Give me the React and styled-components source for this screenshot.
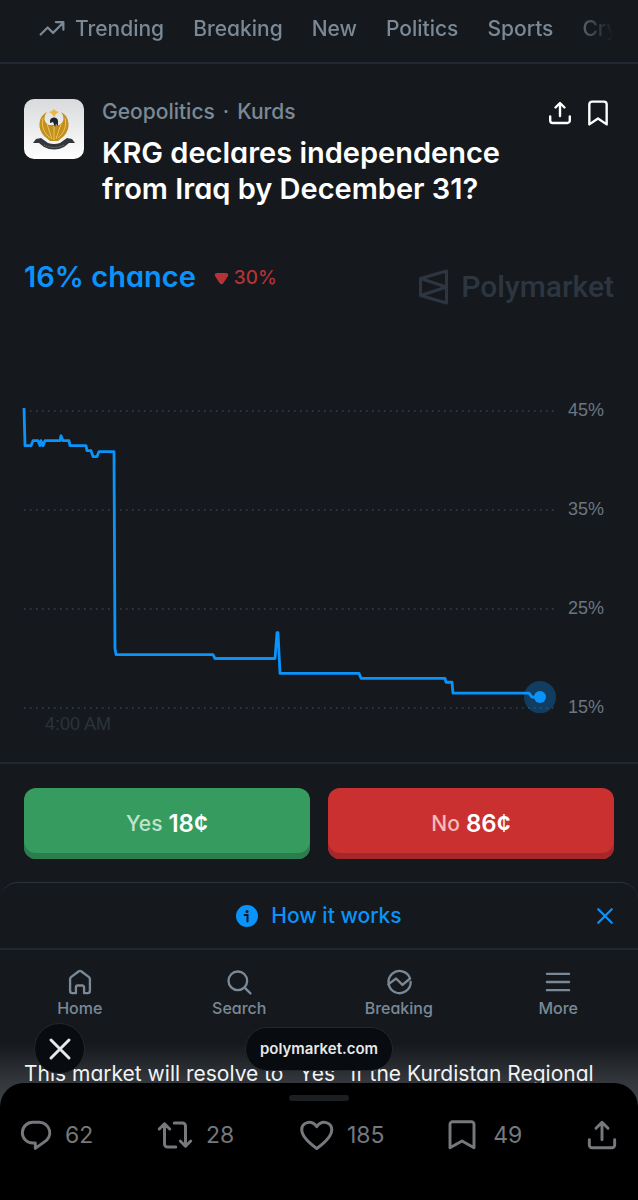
import styled, { createGlobalStyle } from "styled-components"

const GlobalStyle = createGlobalStyle`
    * {
        box-sizing: border-box;
    }

    body {
        margin: 0;
        background-color: #15191d;
        font-family: Inter, "Liberation Sans", sans-serif;
        font-feature-settings: "cv11";
        color: #ffffff;
    }

    h1, p {
        margin: 0;
    }

    button {
        font: inherit;
        font-feature-settings: inherit;
        color: inherit;
        background: none;
        border: 0;
        padding: 0;
        cursor: pointer;
    }

    a {
        color: inherit;
        text-decoration: none;
    }

    svg {
        display: block;
        flex: none;
    }
`

const Page = styled.div`
    display: flex;
    flex-direction: column;
    min-height: 100vh;
    overflow: hidden;
`

const TopNav = styled.nav`
    display: flex;
    align-items: center;
    gap: 29px;
    height: 64px;
    padding: 0 0 8px 39px;
    margin-right: 24px;
    overflow: hidden;
    mask-image: linear-gradient(to right, #000 92%, transparent 100%);
`

const TopBar = styled.header`
    border-bottom: 2px solid #222832;
    height: 64px;
`

const Topic = styled.a`
    display: flex;
    align-items: center;
    gap: 10px;
    font-size: 21px;
    font-weight: 500;
    color: #7b8996;
    white-space: nowrap;
`

const MarketHead = styled.section`
    display: flex;
    gap: 18px;
    padding: 35px 24px 0;
`

const Emblem = styled.div`
    width: 60px;
    height: 60px;
    flex: none;
    border-radius: 10px;
    overflow: hidden;
    background: linear-gradient(#d9dadc, #ffffff);
`

const HeadText = styled.div`
    flex: 1;
`

const Crumbs = styled.div`
    display: flex;
    gap: 8px;
    font-size: 21px;
    line-height: 26px;
    font-weight: 500;
    color: #7b8996;
`

const Title = styled.h1`
    margin-top: 10px;
    font-size: 29px;
    line-height: 36px;
    font-weight: 600;
    max-width: 420px;
`

const HeadActions = styled.div`
    display: flex;
    align-items: center;
    gap: 13px;
    height: 28px;
    padding-right: 3px;
`

const PriceRow = styled.section`
    display: flex;
    align-items: flex-start;
    padding: 50px 24px 0;
`

const Chance = styled.div`
    font-size: 29px;
    line-height: 40px;
    font-weight: 600;
    color: #0a93fb;
`

const Change = styled.div`
    display: flex;
    align-items: center;
    gap: 5px;
    margin-left: 18px;
    font-size: 19px;
    line-height: 42px;
    font-weight: 500;
    color: #b53236;
`

const Watermark = styled.div`
    display: flex;
    align-items: center;
    gap: 12px;
    margin: 10px 0 0 auto;
    font-family: Roboto, sans-serif;
    font-size: 30px;
    line-height: 40px;
    font-weight: 500;
    color: #2d3640;
`

const ChartSection = styled.section`
    padding: 99px 24px 27px;
    border-bottom: 2px solid #222832;
    font-family: "Liberation Sans", sans-serif;
    font-size: 18px;
    line-height: 24px;
`

const ChartRow = styled.div`
    display: flex;
`

const Plot = styled.svg`
    flex: 1;
    min-width: 0;
    height: 307px;
    overflow: visible;
`

const Scale = styled.div`
    display: flex;
    flex-direction: column;
    justify-content: space-between;
    width: 46px;
    height: 321px;
    margin: -8px 0;
    color: #6b7682;
`

const TimeLabel = styled.div`
    padding-left: 21px;
    line-height: 22px;
    color: #2b323b;
`

const Trade = styled.section`
    display: grid;
    grid-template-columns: 1fr 1fr;
    gap: 18px;
    padding: 24px 24px 23px;
`

const TradeButton = styled.button`
    display: flex;
    align-items: center;
    justify-content: center;
    gap: 6px;
    height: 71px;
    border-radius: 12px;
    font-size: 21px;
    font-weight: 500;
    color: ${(props) => props.$label};
    background-color: ${(props) => props.$face};
    box-shadow: inset 0 -6px 0 ${(props) => props.$edge};

    b {
        font-size: 24px;
        font-weight: 600;
        color: #ffffff;
    }
`

const HowBar = styled.section`
    display: grid;
    grid-template-columns: 1fr auto 1fr;
    align-items: center;
    height: 66px;
    padding: 0 24px;
    border-top: 1px solid #2a313b;
    border-radius: 18px 18px 0 0;
`

const HowButton = styled.button`
    grid-column: 2;
    display: flex;
    align-items: center;
    gap: 13px;
    font-size: 21px;
    font-weight: 500;
    color: #0a93fb;
`

const CloseButton = styled.button`
    justify-self: end;
    color: #0a93fb;
`

const Tabs = styled.nav`
    display: grid;
    grid-template-columns: repeat(4, 1fr);
    height: 75px;
    padding-top: 18px;
    border-top: 2px solid #222832;
`

const Tab = styled.a`
    display: flex;
    flex-direction: column;
    align-items: center;
    font-size: 16px;
    line-height: 24px;
    font-weight: 500;
    color: #7b8996;
`

const Overlay = styled.div`
    display: grid;
    grid-template-columns: 1fr auto 1fr;
    align-items: center;
    position: relative;
    z-index: 1;
    height: 50px;
    padding: 0 34px;
`

const RoundButton = styled.button`
    display: grid;
    place-items: center;
    width: 51px;
    height: 51px;
    border: 1px solid #24282d;
    border-radius: 50%;
    background-color: #080b0f;
    color: #e6e8ea;
`

const Address = styled.div`
    height: 44px;
    padding: 0 14px;
    border: 1px solid #24282d;
    border-radius: 22px;
    background-color: #080b0f;
    font-size: 15px;
    line-height: 42px;
    font-weight: 600;
    font-feature-settings: normal;
    color: #e6e8ea;
`

const Rules = styled.p`
    height: 40px;
    margin-top: -30px;
    padding: 16px 24px 0;
    overflow: hidden;
    font-size: 21px;
    line-height: 30px;
    white-space: nowrap;
    color: #f2f3f4;
    background: linear-gradient(#15191d, #34373b);
`

const Sheet = styled.footer`
    flex: 1;
    border-radius: 24px 24px 0 0;
    background-color: #000000;
`

const SheetBack = styled.div`
    display: flex;
    flex: 1;
    background: linear-gradient(#34373b, #404347 24px);
`

const Grabber = styled.div`
    width: 60px;
    height: 6px;
    margin: 12px auto 16px;
    border-radius: 3px;
    background-color: #1c1f22;
`

const PostActions = styled.div`
    display: flex;
    justify-content: space-between;
    align-items: center;
    padding: 0 20px;
`

const PostAction = styled.button`
    display: flex;
    align-items: center;
    gap: 13px;
    font-size: 23px;
    line-height: 36px;
    color: #75787c;
`

// [x, value] samples of the price, x runs 0..516
const history = [
    [0, 45.3], [1, 41.5], [7, 41.5], [9, 42], [14, 42], [16, 41.5], [17, 42], [19, 41.5], [21, 42],
    [36, 42], [37, 42.5], [39, 42], [45, 42], [46, 41.5], [62, 41.5], [63, 41], [67, 41], [69, 40.4],
    [73, 40.4], [75, 40.9], [90, 40.9], [91, 21], [92, 20.4], [189, 20.4], [191, 20], [251, 20], [253, 22.6],
    [254, 22.6], [256, 18.5], [335, 18.5], [337, 18], [421, 18], [422, 17.6], [428, 17.6], [429, 16.5],
    [505, 16.5], [508, 16.1], [516, 16.1],
]
const levels = [45, 35, 25, 15]

const toY = (value) => 5 + (45 - value) * 9.9

function Chart() {
    const line = history.map(([x, value]) => `${x},${toY(value)}`).join(" ")
    return (
        <Plot viewBox="0 0 544 307" preserveAspectRatio="none" role="img" aria-label="Price history">
            {levels.map((level) => (
                <path key={level} d={`M0 ${toY(level)}H533`} stroke="#3a424c" strokeWidth="1.5" strokeDasharray="1.5 4.5" />
            ))}
            <polyline points={line} fill="none" stroke="#0a93fb" strokeWidth="2.8" strokeLinejoin="round" />
            <circle cx="516" cy={toY(16.1)} r="16" fill="#0a93fb" opacity="0.3" />
            <circle cx="516" cy={toY(16.1)} r="6" fill="#0a93fb" />
        </Plot>
    )
}

function Icon({ size = 28, width = 2, children }) {
    return (
        <svg width={size} height={size} viewBox="0 0 24 24" fill="none" stroke="currentColor" strokeWidth={width} strokeLinecap="round" strokeLinejoin="round" aria-hidden="true">
            {children}
        </svg>
    )
}

function App() {
    return (
        <>
            <GlobalStyle />
            <Page>
                <TopBar>
                    <TopNav>
                        <Topic href="#trending">
                            <Icon size={26}>
                                <path d="M1.5 18l6.5-6.5 5 5L22.500 7M15.500 6.500h7v7" />
                            </Icon>
                            Trending
                        </Topic>
                        <Topic href="#breaking">Breaking</Topic>
                        <Topic href="#new">New</Topic>
                        <Topic href="#politics">Politics</Topic>
                        <Topic href="#sports">Sports</Topic>
                        <Topic href="#crypto">Crypto</Topic>
                    </TopNav>
                </TopBar>

                <MarketHead>
                    <Emblem>
                        <svg width="60" height="60" viewBox="0 0 60 60" aria-hidden="true">
                            <path d="M23 13C14 17 13 30 20 37l6 5h8l6-5c7-7 6-20-3-24 4 5 3 11-2 13H25c-5-2-6-8-2-13z" fill="#c1901f" />
                            <path d="M19 19c-2 8 1 15 7 20M41 19c2 8-1 15-7 20M23 25l5 15M37 25l-5 15M30 27v14" stroke="#edc457" fill="none" />
                            <path d="M30 10l2 2 3 1-3 2-2 3-2-3-3-2 3-1z" fill="#e8b944" />
                            <path d="M26 21c2-4 8-3 8 1v5l-2-2-1 3-2-5-3 1z" fill="#20252b" />
                            <path d="M9 44l3-4 5-1 7 5q6 2 12 0l7-5 5 1 3 4-6 0-5 4q-10 5-20 0l-5-4z" fill="#33363a" />
                            <path d="M20 46q10 5 20 0" stroke="#8c8e90" strokeDasharray="1 1" fill="none" />
                        </svg>
                    </Emblem>
                    <HeadText>
                        <Crumbs>
                            <a href="#geopolitics">Geopolitics</a>
                            <span>·</span>
                            <a href="#kurds">Kurds</a>
                        </Crumbs>
                        <Title>KRG declares independence from Iraq by December 31?</Title>
                    </HeadText>
                    <HeadActions>
                        <button aria-label="Share">
                            <Icon size={24} width={2.4}>
                                <path d="M12 15V2.500M7.500 6.500L12 2l4.500 4.500M2.200 15.500v4a2.500 2.500 0 0 0 2.500 2.500h14.600a2.500 2.500 0 0 0 2.500-2.500v-4" />
                            </Icon>
                        </button>
                        <button aria-label="Save">
                            <Icon size={26} width={2.2}>
                                <path d="M4 22.500V4a2.500 2.500 0 0 1 2.500-2.500h11A2.500 2.500 0 0 1 20 4v18.500l-8-5.500z" />
                            </Icon>
                        </button>
                    </HeadActions>
                </MarketHead>

                <PriceRow>
                    <Chance>16% chance</Chance>
                    <Change>
                        <svg width="15" height="13" viewBox="0 0 15 13" aria-hidden="true">
                            <path d="M3 1h9q3 0 2 3L9.500 11q-2 2.500-4 0L1 4Q0 1 3 1z" fill="currentColor" />
                        </svg>
                        30%
                    </Change>
                    <Watermark>
                        <svg width="31" height="36" viewBox="0 0 31 36" fill="none" stroke="currentColor" strokeWidth="3" strokeLinejoin="round" aria-hidden="true">
                            <path d="M2.500 9.500L28.500 2v32L2.500 26.500zM2.500 9.500L28.500 18 2.500 26.500" />
                        </svg>
                        Polymarket
                    </Watermark>
                </PriceRow>

                <ChartSection>
                    <ChartRow>
                        <Chart />
                        <Scale>
                            {levels.map((level) => (
                                <span key={level}>{level}%</span>
                            ))}
                        </Scale>
                    </ChartRow>
                    <TimeLabel>4:00 AM</TimeLabel>
                </ChartSection>

                <Trade>
                    <TradeButton $face="#369b5e" $edge="#2c7d4e" $label="#bfe3cb">
                        Yes <b>18¢</b>
                    </TradeButton>
                    <TradeButton $face="#cb3030" $edge="#a4282a" $label="#f2bcbc">
                        No <b>86¢</b>
                    </TradeButton>
                </Trade>

                <HowBar>
                    <HowButton>
                        <svg width="22" height="22" viewBox="0 0 22 22" aria-hidden="true">
                            <circle cx="11" cy="11" r="11" fill="currentColor" />
                            <circle cx="11" cy="6.500" r="1.500" fill="#15191d" />
                            <path d="M8.500 10h3v6.500" fill="none" stroke="#15191d" strokeWidth="2" strokeLinecap="round" />
                        </svg>
                        How it works
                    </HowButton>
                    <CloseButton aria-label="Close">
                        <Icon size={18} width={3}>
                            <path d="M3 3l18 18M21 3L3 21" />
                        </Icon>
                    </CloseButton>
                </HowBar>

                <Tabs>
                    <Tab href="#home">
                        <Icon>
                            <path d="M3.500 9.500q0-1 .8-1.700l6.700-5q1-.7 2 0l6.700 5q.8.700.8 1.700V19.500a2 2 0 0 1-2 2h-3v-5a1.500 1.500 0 0 0-1.500-1.500h-4a1.500 1.500 0 0 0-1.500 1.500v5H5.500a2 2 0 0 1-2-2z" />
                        </Icon>
                        Home
                    </Tab>
                    <Tab href="#search">
                        <Icon>
                            <circle cx="11" cy="11" r="8" />
                            <path d="M16.800 16.800l5 5" />
                        </Icon>
                        Search
                    </Tab>
                    <Tab href="#breaking">
                        <Icon>
                            <path d="M2.800 14L9.500 9l5.500 5.500 6.500-5.500A9.500 9.500 0 1 0 22 12" />
                        </Icon>
                        Breaking
                    </Tab>
                    <Tab href="#more">
                        <Icon>
                            <path d="M2.500 5h19M2.500 12h19M2.500 19h19" />
                        </Icon>
                        More
                    </Tab>
                </Tabs>

                <Overlay>
                    <RoundButton aria-label="Close page">
                        <Icon size={24} width={3}>
                            <path d="M3 3l18 18M21 3L3 21" />
                        </Icon>
                    </RoundButton>
                    <Address>polymarket.com</Address>
                </Overlay>
                <Rules>This market will resolve to "Yes" if the Kurdistan Regional</Rules>

                <SheetBack>
                    <Sheet>
                        <Grabber />
                        <PostActions>
                            <PostAction aria-label="Replies">
                                <Icon size={32} width={2.2}>
                                    <path d="M9.500 2.500h5a7.800 7.800 0 0 1 3.500 14.800L11.500 22V18H9.500a7.700 7.700 0 0 1 0-15.500z" />
                                </Icon>
                                62
                            </PostAction>
                            <PostAction aria-label="Reposts">
                                <Icon size={36} width={2}>
                                    <path d="M1.500 8L5 4.500 8.500 8M5 5v13a2 2 0 0 0 2 2h5.500M22.500 16L19 19.500 15.500 16M19 19V6a2 2 0 0 0-2-2h-5.500" />
                                </Icon>
                                28
                            </PostAction>
                            <PostAction aria-label="Likes">
                                <Icon size={36} width={2}>
                                    <path d="M12.500 21C7 17 2.500 13 2.500 8.500 2.500 3.500 9 1.500 12.500 6.500 16 1.500 22.500 3.500 22.500 8.500 22.500 13 18 17 12.500 21z" />
                                </Icon>
                                185
                            </PostAction>
                            <PostAction aria-label="Bookmarks">
                                <Icon size={32} width={2.2}>
                                    <path d="M1.500 21.500V4a2 2 0 0 1 2-2h14a2 2 0 0 1 2 2v17.500l-9-5z" />
                                </Icon>
                                49
                            </PostAction>
                            <PostAction aria-label="Share post">
                                <Icon size={32} width={2.2}>
                                    <path d="M12 15.500V3M7.500 7L12 2.500 16.500 7M2.500 15.500v4a2 2 0 0 0 2 2h15a2 2 0 0 0 2-2v-4" />
                                </Icon>
                            </PostAction>
                        </PostActions>
                    </Sheet>
                </SheetBack>
            </Page>
        </>
    )
}

export default App
